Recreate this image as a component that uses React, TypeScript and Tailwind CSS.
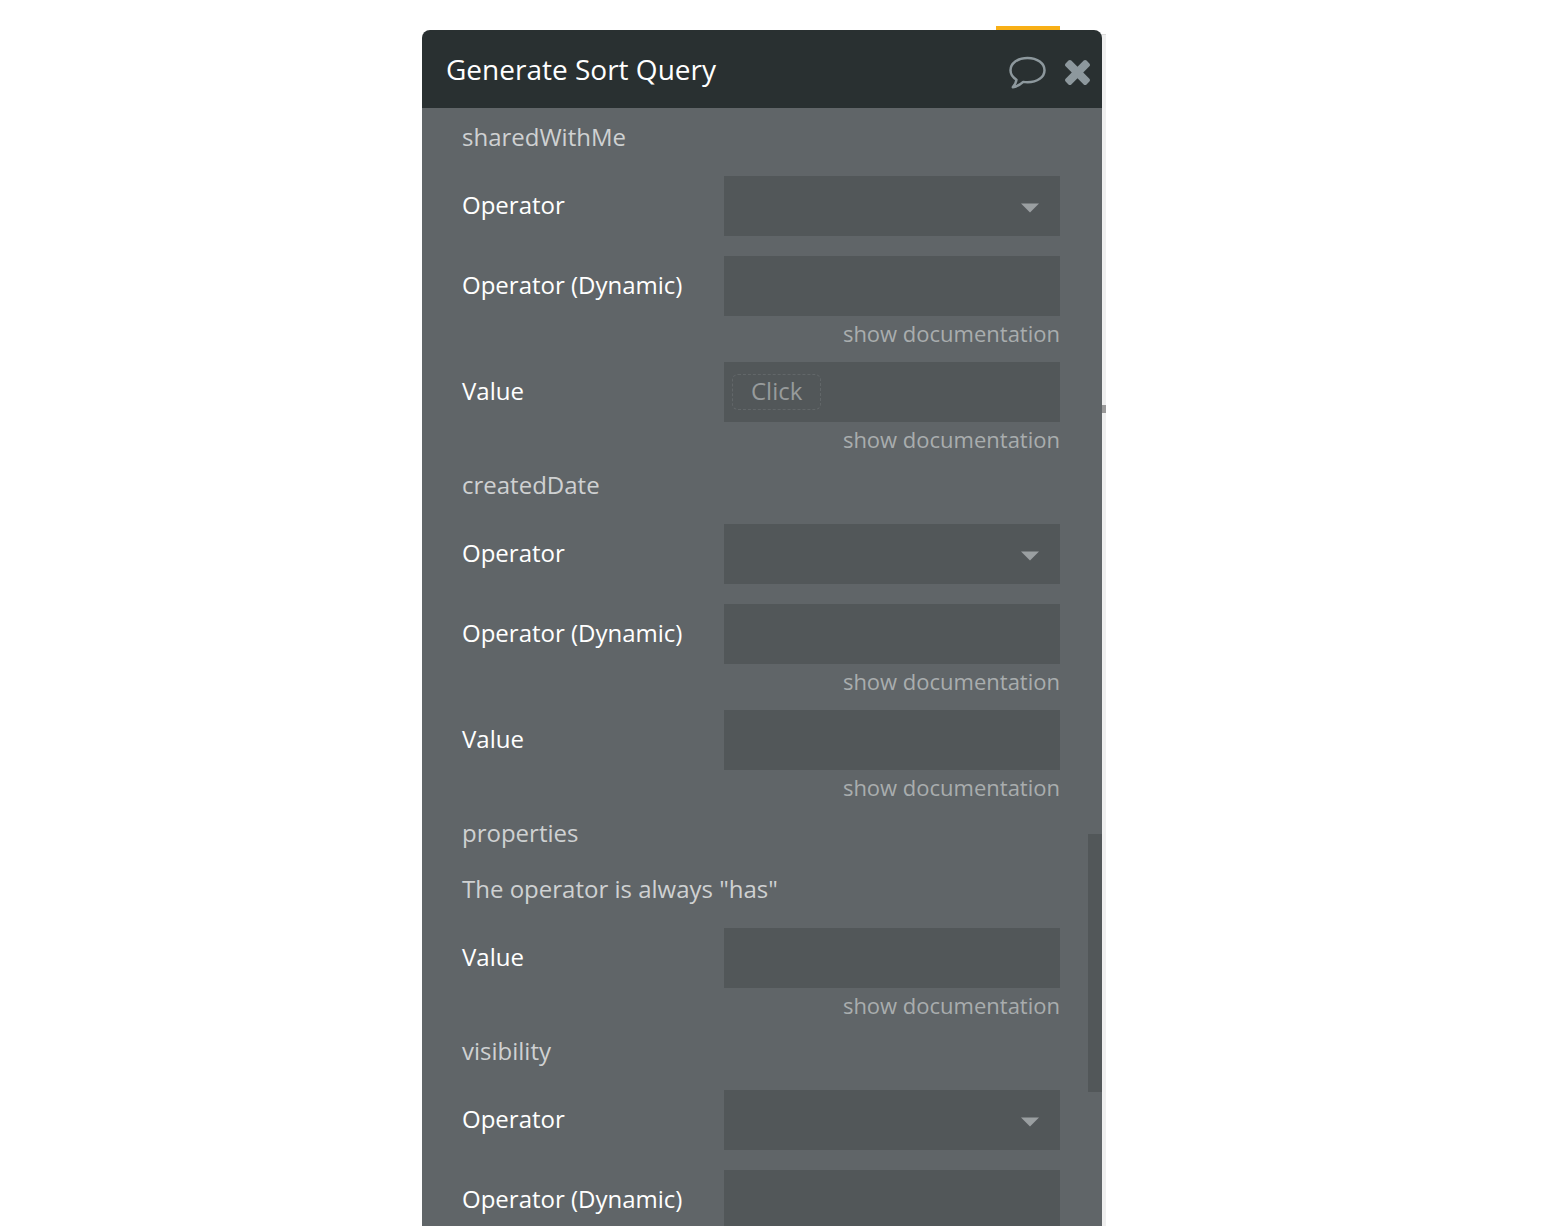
import { ReactNode } from "react";

const fieldBox = "block h-[60px] w-full bg-[#525759] outline-none";

function Heading({ children }: { children: ReactNode }) {
  return <p className="mb-[22px] text-2xl leading-[34px] text-[#cfd1d2]">{children}</p>;
}

function Row({ id, label, children }: { id: string; label: string; children: ReactNode }) {
  return (
    <div className="flex">
      <label htmlFor={id} className="h-[60px] min-w-0 flex-1 text-2xl leading-[58px] font-medium whitespace-nowrap text-white">
        {label}
      </label>
      <div className="w-[336px] shrink-0">{children}</div>
    </div>
  );
}

function Documentation() {
  return (
    <a href="#" className="mb-3 block text-right text-[22px] leading-[34px] text-[#a9adae]">
      show documentation
    </a>
  );
}

function SelectRow({ id }: { id: string }) {
  return (
    <div className="mb-5">
      <Row id={id} label="Operator">
        <div className="relative">
          <select id={id} className={fieldBox + " appearance-none"} />
          <svg viewBox="0 0 18 10" className="pointer-events-none absolute top-[27px] right-[21px] h-[10px] w-[18px]" fill="#9a9fa1" aria-hidden="true">
            <path d="M0 0.500h18L9 9.500z" />
          </svg>
        </div>
      </Row>
    </div>
  );
}

function InputRow({ id, label, documented = true }: { id: string; label: string; documented?: boolean }) {
  return (
    <Row id={id} label={label}>
      <input id={id} type="text" className={fieldBox} />
      {documented && <Documentation />}
    </Row>
  );
}

function ClickRow({ id, label }: { id: string; label: string }) {
  return (
    <Row id={id} label={label}>
      <div className="flex h-[60px] items-center bg-[#525759] px-2">
        <button id={id} type="button" className="h-9 rounded-md border border-dashed border-[#626769] px-[18px] pb-0.5 text-2xl leading-8 text-[#979b9c]">
          Click
        </button>
      </div>
      <Documentation />
    </Row>
  );
}

export default function App() {
  return (
    <div className="flex h-screen flex-col overflow-hidden bg-white pt-[30px] pr-[18px] font-['Open_Sans',sans-serif]">
      <main className="relative mx-auto flex min-h-0 w-full max-w-[680px] flex-1 flex-col">
        <div className="absolute -top-1 right-[42px] h-2 w-16 bg-[#f8af16]" />
        <div className="absolute top-1 -right-1 bottom-0 w-2 border-t border-[#dddddd] bg-[#efefef]" />
        <div className="absolute top-[375px] -right-1 h-2 w-2 bg-[#999999]" />
        <header className="relative flex h-[78px] shrink-0 items-center rounded-t-lg bg-[#293031] pr-3 pl-6">
          <h1 className="flex-1 text-[28px] leading-10 text-white">Generate Sort Query</h1>
          <button type="button" aria-label="Comments" className="mr-[18px]">
            <svg viewBox="0 0 38 34" className="mt-2 block h-[34px] w-[38px]" fill="none" stroke="#8d989d" strokeWidth="2.500" strokeLinejoin="round">
              <path d="M18.500 2C28.500 2 35.500 7.500 35.500 14.300S28.500 26.300 18.500 26.300c-1.500 0-3-.1-4.300-.4C11.500 28.500 7.500 30.600 3.800 31.200c2-2 3.300-4.500 3.700-7.500C3.500 21.300 1.500 18 1.500 14.300 1.500 7.500 8.500 2 18.500 2z" />
            </svg>
          </button>
          <button type="button" aria-label="Close">
            <svg viewBox="302 366 1188 1188" className="mt-1.5 block h-[25px] w-[25px]" fill="#8d989d">
              <path d="M1490 1322q0 40-28 68l-136 136q-28 28-68 28t-68-28l-294-294-294 294q-28 28-68 28t-68-28l-136-136q-28-28-28-68t28-68l294-294-294-294q-28-28-28-68t28-68l136-136q28-28 68-28t68 28l294 294 294-294q28-28 68-28t68 28l136 136q28 28 28 68t-28 68l-294 294 294 294q28 28 28 68z" />
            </svg>
          </button>
        </header>
        <section className="relative min-h-0 flex-1 overflow-hidden bg-[#606568] pt-3 pr-[42px] pl-10">
          <Heading>sharedWithMe</Heading>
          <SelectRow id="shared-operator" />
          <InputRow id="shared-dynamic" label="Operator (Dynamic)" />
          <ClickRow id="shared-value" label="Value" />

          <Heading>createdDate</Heading>
          <SelectRow id="created-operator" />
          <InputRow id="created-dynamic" label="Operator (Dynamic)" />
          <InputRow id="created-value" label="Value" />

          <Heading>properties</Heading>
          <Heading>The operator is always "has"</Heading>
          <InputRow id="properties-value" label="Value" />

          <Heading>visibility</Heading>
          <SelectRow id="visibility-operator" />
          <InputRow id="visibility-dynamic" label="Operator (Dynamic)" documented={false} />
          <div className="absolute top-[726px] right-0 h-[258px] w-3.5 bg-[#525759]" />
        </section>
      </main>
    </div>
  );
}
